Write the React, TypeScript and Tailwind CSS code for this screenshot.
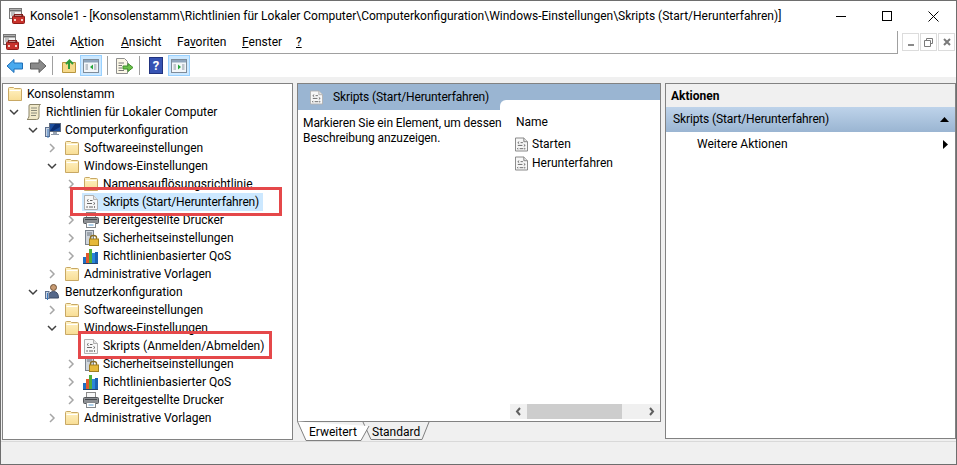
import React from "react";

const Folder = () => (
  <svg width="16" height="14" viewBox="0 0 16 14" className="shrink-0">
    <defs>
      <linearGradient id="fg" x1="0" y1="0" x2="0" y2="1">
        <stop offset="0" stopColor="#fff2c4" />
        <stop offset="1" stopColor="#f8dd94" />
      </linearGradient>
    </defs>
    <path d="M1.5 1.5 Q1.5 0.5 2.5 0.5 H6.5 L7.5 1.5 H13.5 Q14.5 1.5 14.5 2.5 V13.5 H1.5 Z" fill="url(#fg)" stroke="#c8a864" />
    <path d="M2.5 3.5 H13.5" stroke="#fff" />
  </svg>
);

const Script = ({ dark, w = 14 }: { dark?: boolean; w?: number }) => (
  <svg width={w} height="15" viewBox="0 0 14 15" className="shrink-0">
    <path d="M0.5 0.5 H9.5 L13.5 4.5 V14.5 H0.5 Z" fill="#f7f7f7" stroke={dark ? "#808080" : "#b0b0b0"} />
    <path d="M9.5 0.5 V4.5 H13.5" fill="#e4e4e4" stroke={dark ? "#808080" : "#b0b0b0"} />
    <path d="M4.5 4.5 L3 5.5 L4.5 6.5 M6 5.5 H8.5 M3 8.5 H8 M9.5 7.5 L11 8.5 L9.5 9.5 M3.5 11.5 L2.5 12 L3.5 12.5 M5 12 H9 M10 11.5 L11 12 L10 12.5" stroke="#666" fill="none" />
  </svg>
);

const Scroll = () => (
  <svg width="18" height="18" viewBox="0 0 18 18" className="shrink-0">
    <path d="M5 1.5 H15.5 Q14 2.5 14 4 V14 Q14 16.5 11.5 16.5 H2 Q4 15.5 4 13 V3 Q4 1.5 5 1.5 Z" fill="#f1e9c9" stroke="#8b8468" />
    <path d="M6 5 H12 M6 7.5 H12 M6 10 H12 M6 12.5 H11" stroke="#8a8a7a" />
  </svg>
);

const Computer = () => (
  <svg width="18" height="18" viewBox="0 0 18 18" className="shrink-0">
    <rect x="5.5" y="2.5" width="11" height="8" fill="#1d4f9e" stroke="#5f6b7d" />
    <path d="M6 10 L11 3 H16 V6 L9 10 Z" fill="#0b2f72" />
    <rect x="9" y="11" width="4" height="2" fill="#9aa5b4" />
    <path d="M7 13.5 H15" stroke="#8c97a7" />
    <rect x="1.5" y="6.5" width="4" height="9" fill="#c8d3e2" stroke="#5d6f8d" />
    <path d="M4 8 V17" stroke="#3d79bd" />
  </svg>
);

const User = () => (
  <svg width="18" height="18" viewBox="0 0 18 18" className="shrink-0">
    <circle cx="9.5" cy="4.5" r="3" fill="#c79a72" stroke="#6f5238" />
    <path d="M4.5 15 Q4.5 8.5 9.5 8.5 Q14.5 8.5 14.5 15 Z" fill="#55688a" stroke="#3d4a64" />
    <rect x="1.5" y="8.5" width="3.5" height="7" fill="#c8d3e2" stroke="#5d6f8d" />
    <path d="M3.5 10 V17" stroke="#3d79bd" />
  </svg>
);

const Printer = () => (
  <svg width="18" height="18" viewBox="0 0 18 18" className="shrink-0">
    <rect x="4.5" y="1.5" width="9" height="5" fill="#f7f7f7" stroke="#8a8a8a" />
    <rect x="1.5" y="6.5" width="15" height="6" rx="1" fill="#8d9094" stroke="#55585c" />
    <path d="M3 8.5 H15" stroke="#45484c" />
    <rect x="4.5" y="11.5" width="9" height="5" fill="#fff" stroke="#85898d" />
    <path d="M6.5 14 H11.5" stroke="#5aa0d6" />
  </svg>
);

const Security = () => (
  <svg width="18" height="18" viewBox="0 0 18 18" className="shrink-0">
    <rect x="3.5" y="1.5" width="8" height="14" fill="#cfd5dc" stroke="#7a828c" />
    <path d="M5 4 H10 M5 6 H10" stroke="#6d757f" />
    <path d="M8.5 10 V8.5 Q8.5 6.5 11.5 6.5 Q14.5 6.5 14.5 8.5 V10" fill="none" stroke="#8a6d22" strokeWidth="1.4" />
    <rect x="7.5" y="10" width="9" height="6.5" fill="#e6b93a" stroke="#a17f1f" />
  </svg>
);

const Qos = () => (
  <svg width="18" height="18" viewBox="0 0 18 18" className="shrink-0">
    <rect x="1" y="10" width="3" height="6" fill="#1f6fc4" />
    <rect x="4" y="6" width="3" height="10" fill="#e2592b" />
    <rect x="7" y="2" width="3" height="14" fill="#4fae3a" />
    <rect x="10" y="6" width="3" height="10" fill="#2a86d8" />
    <rect x="13" y="5" width="3" height="11" fill="#1c62b4" />
    <path d="M1 16.5 H16" stroke="#24456e" />
  </svg>
);

const AppIcon = ({ size }: { size: number }) => (
  <svg width={size} height={size} viewBox="0 0 16 16" className="shrink-0">
    <rect x="0.5" y="0.5" width="12" height="10" fill="#f2f2f2" stroke="#777" />
    <path d="M1 2.5 H12" stroke="#6d6d6d" strokeWidth="2" />
    <path d="M2 5 H6 M2 7 H6" stroke="#8a8a8a" />
    <rect x="3.5" y="8" width="12" height="7.5" rx="1" fill="#c8322c" stroke="#8e1c18" />
    <rect x="5.5" y="6.5" width="8" height="2" fill="none" stroke="#7f1f1c" />
    <rect x="5" y="11" width="2" height="2" fill="#f5d0c8" />
    <rect x="12" y="11" width="2" height="2" fill="#f5d0c8" />
  </svg>
);

const Chevron = ({ open }: { open?: boolean }) => (
  <svg width="10" height="10" viewBox="0 0 10 10" className="shrink-0">
    {open ? (
      <path d="M1 3 L5 7 L9 3" fill="none" stroke="#404040" strokeWidth="1.5" />
    ) : (
      <path d="M3 1 L7 5 L3 9" fill="none" stroke="#a6a6a6" strokeWidth="1.5" />
    )}
  </svg>
);

type Row = { level: number; text: string; icon: React.ReactNode; chev?: "open" | "closed"; sel?: boolean; tight?: boolean };

const rows: Row[] = [
  { level: 0, text: "Konsolenstamm", icon: <Folder /> },
  { level: 1, text: "Richtlinien für Lokaler Computer", icon: <Scroll />, chev: "open" },
  { level: 2, text: "Computerkonfiguration", icon: <Computer />, chev: "open" },
  { level: 3, text: "Softwareeinstellungen", icon: <Folder />, chev: "closed" },
  { level: 3, text: "Windows-Einstellungen", icon: <Folder />, chev: "open" },
  { level: 4, text: "Namensauflösungsrichtlinie", icon: <Folder />, chev: "closed" },
  { level: 4, text: "Skripts (Start/Herunterfahren)", icon: <Script />, sel: true, tight: true },
  { level: 4, text: "Bereitgestellte Drucker", icon: <Printer />, chev: "closed" },
  { level: 4, text: "Sicherheitseinstellungen", icon: <Security />, chev: "closed" },
  { level: 4, text: "Richtlinienbasierter QoS", icon: <Qos />, chev: "closed" },
  { level: 3, text: "Administrative Vorlagen", icon: <Folder />, chev: "closed" },
  { level: 2, text: "Benutzerkonfiguration", icon: <User />, chev: "open" },
  { level: 3, text: "Softwareeinstellungen", icon: <Folder />, chev: "closed" },
  { level: 3, text: "Windows-Einstellungen", icon: <Folder />, chev: "open" },
  { level: 4, text: "Skripts (Anmelden/Abmelden)", icon: <Script /> },
  { level: 4, text: "Sicherheitseinstellungen", icon: <Security />, chev: "closed" },
  { level: 4, text: "Richtlinienbasierter QoS", icon: <Qos />, chev: "closed" },
  { level: 4, text: "Bereitgestellte Drucker", icon: <Printer />, chev: "closed" },
  { level: 3, text: "Administrative Vorlagen", icon: <Folder />, chev: "closed" },
];

const indent = ["ml-[3px]", "ml-[1px]", "ml-[20px]", "ml-[39px]", "ml-[58px]"];

const TreeRow = ({ r }: { r: Row }) => (
  <div className="relative flex h-[18px] items-center">
    <div className={`flex items-center ${indent[r.level]}`}>
      {r.level > 0 && (
        <span className="flex w-[21px] shrink-0 items-center justify-center pr-[2px]">
          {r.chev ? <Chevron open={r.chev === "open"} /> : null}
        </span>
      )}
      <span className={`flex h-[18px] items-center gap-[3px] ${r.sel ? "bg-[#cce8ff]" : ""}`}>
        <span className="flex w-[18px] shrink-0 justify-center">{r.icon}</span>
        <span className={`whitespace-nowrap pr-[4px] ${r.tight ? "tracking-[-0.13px]" : ""}`}>{r.text}</span>
      </span>
    </div>
  </div>
);

const ToolSep = () => <div className="mx-[5px] h-[19px] w-px bg-[#a0a0a0]" />;

const Arrow = ({ blue }: { blue?: boolean }) => (
  <svg width="18" height="16" viewBox="0 0 18 16" className={blue ? "" : "rotate-180"}>
    <path d="M1 8 L8 1.5 V5 H16.5 V11 H8 V14.5 Z" fill={blue ? "#49a9ee" : "#8a8a8a"} stroke={blue ? "#1f6fb8" : "#5e5e5e"} />
  </svg>
);

const PaneToggle = ({ right }: { right?: boolean }) => (
  <div className="flex h-[21px] w-[22px] items-center justify-center border border-[#99d1ff] bg-[#cce8ff]">
    <svg width="16" height="14" viewBox="0 0 16 14">
      <rect x="0.5" y="0.5" width="15" height="13" fill="#f3f6f9" stroke="#7f8c99" />
      <rect x="1" y="1" width="14" height="2.5" fill="#8fa5bc" />
      <path d="M2.5 6 H5 M2.5 8 H5 M2.5 10 H5 M11 6 H13.5 M11 8 H13.5 M11 10 H13.5" stroke="#8b95a0" />
      <path d={right ? "M7 5.5 L10 8 L7 10.5 Z" : "M10 5.5 L7 8 L10 10.5 Z"} fill="#27a73c" />
    </svg>
  </div>
);

const MdiBtn = ({ children }: { children: React.ReactNode }) => (
  <div className="flex h-[18px] w-[17px] items-center justify-center border border-[#dcdcdc] bg-white">{children}</div>
);

export default function App() {
  return (
    <div className="relative flex h-[465px] w-[957px] flex-col overflow-hidden border border-[#6e6e6e] bg-[#f0f0f0] text-[12px] leading-[15px] text-black [font-family:'Roboto','Noto_Sans',sans-serif]">
      {/* title bar */}
      <div className="flex h-[30px] shrink-0 items-center bg-white pl-[8px]">
        <AppIcon size={16} />
        <span className="ml-[5px] whitespace-nowrap">Konsole1 - [Konsolenstamm\Richtlinien für Lokaler Computer\Computerkonfiguration\Windows-Einstellungen\Skripts (Start/Herunterfahren)]</span>
        <div className="ml-auto flex items-center">
          <div className="flex h-[30px] w-[46px] items-center justify-center"><div className="h-px w-[10px] bg-black" /></div>
          <div className="flex h-[30px] w-[46px] items-center justify-center"><div className="h-[10px] w-[10px] border border-black" /></div>
          <div className="flex h-[30px] w-[46px] items-center justify-center">
            <svg width="11" height="11" viewBox="0 0 11 11"><path d="M0.5 0.5 L10.5 10.5 M10.5 0.5 L0.5 10.5" stroke="#000" /></svg>
          </div>
        </div>
      </div>
      {/* menu bar */}
      <div className="flex h-[23px] shrink-0 items-start bg-white">
        <div className="flex h-[23px] w-[897px] items-center border-r border-b border-[#a0a0a0] pl-[2px]">
          <AppIcon size={16} />
          <div className="ml-[8px] flex">
            <span className="w-[43px]"><u>D</u>atei</span>
            <span className="w-[51px]">A<u>k</u>tion</span>
            <span className="w-[56px]"><u>A</u>nsicht</span>
            <span className="w-[65px]">Fa<u>v</u>oriten</span>
            <span className="w-[54px]"><u>F</u>enster</span>
            <span><u>?</u></span>
          </div>
        </div>
        <div className="ml-[4px] flex gap-[1px] pt-[2px]">
          <MdiBtn><div className="mt-[6px] h-[2px] w-[6px] bg-[#8a8a8a]" /></MdiBtn>
          <MdiBtn>
            <svg width="9" height="9" viewBox="0 0 9 9"><path d="M2.5 2 V0.5 H8.5 V5.5 H6.5 M0.5 2.5 H6.5 V8.5 H0.5 Z" fill="none" stroke="#7a7a7a" /></svg>
          </MdiBtn>
          <MdiBtn>
            <svg width="8" height="8" viewBox="0 0 8 8"><path d="M1 1 L7 7 M7 1 L1 7" stroke="#7a7a7a" strokeWidth="2" /></svg>
          </MdiBtn>
        </div>
      </div>
      {/* toolbar */}
      <div className="flex h-[23px] shrink-0 items-center bg-white pl-[5px]">
        <Arrow blue />
        <div className="w-[5px]" />
        <Arrow />
        <ToolSep />
        <div className="ml-[3px]">
          <svg width="16" height="16" viewBox="0 0 16 16">
            <path d="M1.5 4.5 H14.5 V14.5 H1.5 Z" fill="#f6d98a" stroke="#b8963f" />
            <path d="M8 11 V4 M5 6 L8.5 2.5 L12 6" fill="none" stroke="#2e9a3a" strokeWidth="2" />
          </svg>
        </div>
        <div className="w-[3px]" />
        <PaneToggle />
        <ToolSep />
        <div className="ml-[2px]">
          <svg width="19" height="18" viewBox="0 0 19 18">
            <path d="M1.5 1.5 H9.5 L12.5 4.5 V16.5 H1.5 Z" fill="#fbf7e6" stroke="#8f8f8f" />
            <path d="M3.5 6 H9 M3.5 8.5 H7 M3.5 11 H7 M3.5 13.5 H9" stroke="#777" />
            <path d="M8 9 H13 V6.5 L18 10.5 L13 14.5 V12 H8 Z" fill="#6cc24a" stroke="#3e8e2a" />
          </svg>
        </div>
        <ToolSep />
        <div className="ml-[4px] flex h-[17px] w-[14px] items-center justify-center border border-[#21337f] bg-[#3653b3] text-[13px] font-bold text-white">?</div>
        <div className="w-[5px]" />
        <PaneToggle right />
      </div>
      {/* body */}
      <div className="flex min-h-0 flex-1 gap-[4px] px-[1px] pt-[6px]">
        {/* tree */}
        <div className="relative h-[357px] w-[291px] shrink-0 border border-[#828282] bg-white pt-[1px]">
          {rows.map((r, i) => <TreeRow key={i} r={r} />)}
        </div>
        {/* middle */}
        <div className="flex w-[364px] shrink-0 flex-col">
          <div className="flex h-[339px] flex-col border border-[#828282] bg-white">
            <div className="relative flex h-[26px] shrink-0 items-start bg-[#9ab5d2]">
              <div className="flex h-[26px] items-center pl-[12px] pt-[1px]">
                <Script w={13} />
                <span className="ml-[10px] whitespace-nowrap tracking-[-0.13px]">Skripts (Start/Herunterfahren)</span>
              </div>
              <div className="absolute bottom-0 right-0 h-[10px] w-[160px] rounded-tl-[6px] bg-white" />
            </div>
            <div className="flex min-h-0 flex-1">
              <div className="w-[212px] shrink-0 pl-[5px] pt-[6px] tracking-[-0.1px]">Markieren Sie ein Element, um dessen Beschreibung anzuzeigen.</div>
              <div className="flex min-w-0 flex-1 flex-col">
                <div className="pl-[6px] pt-[5px]">Name</div>
                <div className="mt-[5px] flex h-[19px] items-center gap-[4px] pl-[5px]"><Script dark w={13} /><span>Starten</span></div>
                <div className="flex h-[19px] items-center gap-[4px] pl-[5px]"><Script dark w={13} /><span>Herunterfahren</span></div>
                <div className="mb-[2px] mt-auto flex h-[15px] items-center justify-between bg-[#f0f0f0]">
                  <svg width="17" height="15" viewBox="0 0 17 15"><path d="M10 4 L7 7.5 L10 11" fill="none" stroke="#606060" strokeWidth="2" /></svg>
                  <div className="h-[15px] w-[95px] bg-[#cdcdcd]" />
                  <div className="flex-1" />
                  <svg width="17" height="15" viewBox="0 0 17 15"><path d="M7 4 L10 7.5 L7 11" fill="none" stroke="#606060" strokeWidth="2" /></svg>
                </div>
              </div>
            </div>
          </div>
          <div className="relative flex h-[19px] pl-[12px] pt-[3px]">
            <svg width="135" height="20" viewBox="0 0 135 20" className="absolute left-0 top-[-1px]">
              <path d="M66 1 L74 18.5 H125 L132 1" fill="#f0f0f0" stroke="#808080" />
              <path d="M0.5 0.5 L9 19.5 H64 L72 5" fill="#fff" stroke="#808080" />
            </svg>
            <span className="relative w-[63px]">Erweitert</span>
            <span className="relative">Standard</span>
          </div>
        </div>
        {/* actions */}
        <div className="flex h-[356px] w-[291px] shrink-0 flex-col border border-[#828282] bg-white">
          <div className="flex h-[23px] shrink-0 items-center bg-[#f0f0f0] pl-[5px] pt-[2px] font-bold">Aktionen</div>
          <div className="flex h-[25px] shrink-0 items-center justify-between bg-gradient-to-b from-[#bed3ea] to-[#9ab5d2] pl-[7px] pr-[6px]">
            <span className="tracking-[-0.13px]">Skripts (Start/Herunterfahren)</span>
            <svg width="9" height="5" viewBox="0 0 9 5"><path d="M4.5 0 L9 5 H0 Z" fill="#000" /></svg>
          </div>
          <div className="flex h-[24px] shrink-0 items-center justify-between pl-[31px] pr-[7px]">
            <span>Weitere Aktionen</span>
            <svg width="5" height="9" viewBox="0 0 5 9"><path d="M0 0 L5 4.5 L0 9 Z" fill="#000" /></svg>
          </div>
        </div>
      </div>
      {/* status bar */}
      <div className="h-[23px] shrink-0 border-t border-[#d9d9d9] bg-[#f0f0f0]" />
      {/* annotations */}
      <div className="pointer-events-none absolute left-[69px] top-[186px] h-[29px] w-[212px] border-[3px] border-[#e5484a]" />
      <div className="pointer-events-none absolute left-[77px] top-[330px] h-[28px] w-[194px] border-[3px] border-[#e5484a]" />
    </div>
  );
}
